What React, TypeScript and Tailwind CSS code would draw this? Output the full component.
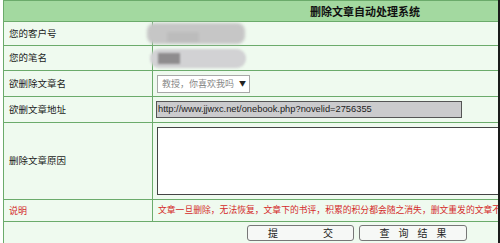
import React from "react";

const label = "h-full border border-[#6bab6b] pl-[5px] text-left align-middle text-[9.5px] leading-none text-[#1a1a1a]";
const cell = "border border-[#6bab6b] pl-[4px] align-middle";

const App = () => {
  return (
    <div className="relative h-[243px] w-[500px] overflow-hidden bg-white font-['Noto_Sans_CJK_SC',sans-serif]">
      <table className="ml-[3px] w-[724px] table-fixed border-collapse bg-[#effaef]">
        <colgroup>
          <col className="w-[149px]" />
          <col />
        </colgroup>
        <tbody>
          <tr className="h-[21px] bg-[#a3d9a0]">
            <th colSpan={2} className="border border-[#6bab6b] text-center text-[11px] font-bold leading-none text-[#111]">
              删除文章自动处理系统
            </th>
          </tr>
          <tr className="h-[24px]">
            <td className={label}>您的客户号</td>
            <td className="border border-[#6bab6b] align-middle">
              <div className="-ml-[6px] h-[21px] w-[98px] rounded-[8px] bg-[#c6c6c6] blur-[1.5px]">
                <div className="ml-[20px] mt-[9px] inline-block h-[10px] w-[32px] bg-[#bcbcbc]" />
              </div>
            </td>
          </tr>
          <tr className="h-[25px]">
            <td className={label}>您的笔名</td>
            <td className="border border-[#6bab6b] align-middle">
              <div className="-ml-[3px] flex h-[19px] w-[96px] items-center rounded-[9px] bg-[#d2d2d4] pl-[8px] blur-[1.2px]">
                <div className="h-[11px] w-[22px] bg-[#8e8c8e]" />
              </div>
            </td>
          </tr>
          <tr className="h-[26px]">
            <td className={label}>欲删除文章名</td>
            <td className={cell}>
              <div className="flex h-[18px] w-[93px] items-center justify-between whitespace-nowrap border border-[#a8a8a8] bg-white pl-[4px] pr-[3px] text-[9px] leading-none text-[#888]">
                <span>教授，你喜欢我吗</span>
                <span className="text-[7px] text-[#222]">▼</span>
              </div>
            </td>
          </tr>
          <tr className="h-[26px]">
            <td className={label}>欲删文章地址</td>
            <td className="border border-[#6bab6b] pl-[3px] align-middle">
              <div className="flex h-[17px] w-[306px] items-center border border-[#555] bg-[#cbcbcd] pl-[1px] font-['Liberation_Sans',sans-serif] text-[9.3px] text-[#222]">
                http://www.jjwxc.net/onebook.php?novelid=2756355
              </div>
            </td>
          </tr>
          <tr className="h-[77px]">
            <td className={label}>删除文章原因</td>
            <td className={cell}>
              <div className="h-[68px] w-[430px] border border-[#444] bg-white" />
            </td>
          </tr>
          <tr className="h-[22px]">
            <td className="border border-[#6bab6b] pl-[5px] align-middle text-[9px] leading-none text-[#d42a2a]">说明</td>
            <td className="overflow-hidden whitespace-nowrap border border-[#6bab6b] pl-[5px] align-middle text-[8.8px] leading-none text-[#d42a2a]">
              文章一旦删除，无法恢复，文章下的书评，积累的积分都会随之消失，删文重发的文章不能
            </td>
          </tr>
          <tr className="h-[22px]">
            <td colSpan={2} className="border border-[#6bab6b] pl-[243px] align-middle">
              <div className="flex gap-[5px]">
                <button className="flex h-[16px] w-[107px] items-center justify-center gap-[45px] rounded-[3px] border border-[#777] bg-[#f6f8f6] text-[10px] leading-none text-[#222]">
                  <span>提</span>
                  <span>交</span>
                </button>
                <button className="flex h-[16px] w-[108px] items-center justify-center gap-[9px] rounded-[3px] border border-[#777] bg-[#f6f8f6] text-[10px] leading-none text-[#222]">
                  <span>查</span>
                  <span>询</span>
                  <span>结</span>
                  <span>果</span>
                </button>
              </div>
            </td>
          </tr>
        </tbody>
      </table>
      <div className="absolute right-0 top-0 h-full w-[2px] bg-[#1a1a1a]" />
    </div>
  );
};

export default App;
